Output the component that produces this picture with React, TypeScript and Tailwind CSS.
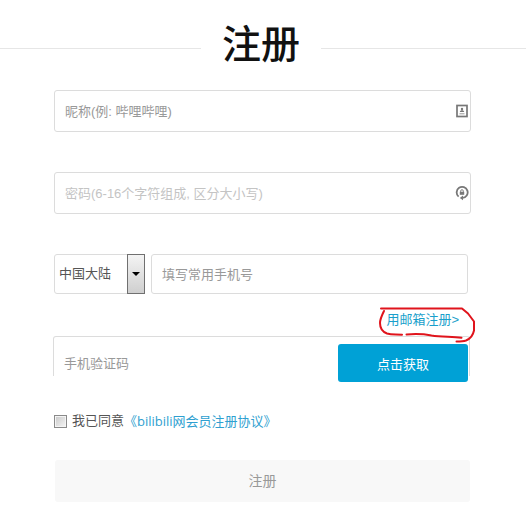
import type { ReactNode } from 'react';

const inputClass =
  'w-full rounded-[3px] border border-[#dcdcdc] bg-white px-[10px] text-[13px] text-[#555] outline-none';

function IconField({ children, icon }: { children: ReactNode; icon: ReactNode }) {
  return (
    <div className="relative">
      {children}
      <span className="pointer-events-none absolute inset-y-0 right-[2px] flex items-center">{icon}</span>
    </div>
  );
}

function ContactIcon() {
  return (
    <svg width="14" height="14" viewBox="0 0 14 14" aria-hidden="true">
      <rect x="2" y="1.5" width="10" height="11" fill="#fff" stroke="#777" strokeWidth="1.7" />
      <circle cx="7" cy="5" r="1.2" fill="#777" />
      <path d="M4.8 8c.2-1.300 1-1.800 2.200-1.800s2 .5 2.200 1.800z" fill="#777" />
      <path d="M4.500 9.800h5" stroke="#999" />
    </svg>
  );
}

function LockIcon() {
  return (
    <svg width="14" height="16" viewBox="0 0 14 16" aria-hidden="true">
      <path d="M3.600 11.600A5.500 5.500 0 1 1 7.500 12.900" fill="none" stroke="#777" strokeWidth="1.8" />
      <path d="M8 10.600v4.600L4.800 12.900z" fill="#777" />
      <rect x="4.800" y="6.800" width="4.400" height="3" fill="#777" />
      <path d="M5.700 7V6a1.300 1.300 0 0 1 2.600 0v1" fill="none" stroke="#777" strokeWidth=".9" />
    </svg>
  );
}

function RedCircle() {
  return (
    <svg
      className="pointer-events-none absolute -top-[6px] -left-[10px]"
      width="104"
      height="42"
      viewBox="376 304 104 42"
      fill="none"
      stroke="#e0141c"
      strokeWidth="2"
      strokeLinecap="round"
      strokeLinejoin="round"
      aria-hidden="true"
    >
      <path d="M381 308.5H462l6 5 6 8v9c-1 5-3 8-8 10-3 1-6 1-9.500 1" />
      <path d="M384 311c-2 4-4 8-4 12 0 6 3 9 7 10.500 5 1.500 10 .5 15 1.200" />
      <path d="M406.500 334.500c10-.8 17-.5 25 1 10 1.500 20 1 30 2.200" />
    </svg>
  );
}

export default function App() {
  return (
    <main className="bg-white pb-[3px] font-['Liberation_Sans','Noto_Sans_CJK_SC',sans-serif] text-[13px] leading-5 text-[#555]">
      <header className="flex items-center pt-5">
        <div className="h-px grow basis-0 bg-[#e6e6e6]" />
        <h1 className="w-[120px] pb-[14px] text-center font-['Noto_Sans_CJK_SC',sans-serif] text-[39px] leading-[42px] font-medium text-[#111]">
          注册
        </h1>
        <div className="h-px grow basis-1 bg-[#e6e6e6]" />
      </header>

      <form className="mt-[14px] mr-[55px] ml-[54px]">
        <IconField icon={<ContactIcon />}>
          <input
            type="text"
            aria-label="昵称"
            placeholder="昵称(例: 哔哩哔哩)"
            className={`${inputClass} block h-[42px] placeholder:text-[#999]`}
          />
        </IconField>

        <div className="mt-10">
          <IconField icon={<LockIcon />}>
            <input
              type="password"
              aria-label="密码"
              placeholder="密码(6-16个字符组成, 区分大小写)"
              className={`${inputClass} block h-[42px] placeholder:text-[#c4c4c4]`}
            />
          </IconField>
        </div>

        <div className="mt-10 mr-[3px] flex gap-[6px]">
          <div className="relative w-[91px] shrink-0">
            <select
              aria-label="地区"
              className="block h-10 w-full appearance-none rounded-[3px] border border-[#dcdcdc] bg-white pl-1 text-[13px] text-[#555] outline-none"
            >
              <option>中国大陆</option>
            </select>
            <span className="pointer-events-none absolute inset-y-0 right-0 flex w-[18px] items-center justify-center border border-[#707070] bg-linear-to-b from-[#f4f4f4] to-[#cfcfcf]">
              <svg width="8" height="4" viewBox="0 0 8 4" aria-hidden="true">
                <path d="M0 0h8L4 4z" fill="#000" />
              </svg>
            </span>
          </div>
          <input
            type="tel"
            aria-label="手机号"
            placeholder="填写常用手机号"
            className={`${inputClass} h-10 min-w-0 flex-1 placeholder:text-[#999]`}
          />
        </div>

        <div className="mt-4 mr-3 flex justify-end">
          <div className="relative">
            <a href="#email" className="block text-[#1a9fcb]">
              用邮箱注册&gt;
            </a>
            <RedCircle />
          </div>
        </div>

        <div className="mt-[6px] mr-px -ml-px flex h-10 items-start rounded-t-[3px] border-x border-t border-[#dcdcdc]">
          <input
            type="text"
            aria-label="手机验证码"
            placeholder="手机验证码"
            className="h-[53px] min-w-0 flex-1 bg-transparent px-[10px] text-[13px] outline-none placeholder:text-[#999]"
          />
          <button
            type="button"
            className="mt-[7px] mr-px h-[38px] w-[130px] shrink-0 rounded-[3px] bg-[#00a1d6] pt-1 text-[13px] text-white"
          >
            点击获取
          </button>
        </div>

        <div className="mt-[35px] flex h-5 items-center">
          <input
            id="agree"
            type="checkbox"
            className="mr-[5px] h-[13px] w-[13px] appearance-none border border-[#8a8a8a] bg-linear-to-br from-[#c8c8c8] to-[#f6f6f6] shadow-[inset_0_0_0_1px_#f4f4f4] checked:bg-[#00a1d6]"
          />
          <label htmlFor="agree">我已同意</label>
          <a
            href="#agreement"
            className="font-['Open_Sans','Noto_Sans_CJK_SC',sans-serif] text-[#2f9fd0]"
          >
            《bilibili网会员注册协议》
          </a>
        </div>

        <button
          type="submit"
          className="mt-[29px] ml-px h-[42px] w-[calc(100%-2px)] rounded-[3px] bg-[#f8f8f8] text-sm text-[#999]"
        >
          注册
        </button>
      </form>
    </main>
  );
}
